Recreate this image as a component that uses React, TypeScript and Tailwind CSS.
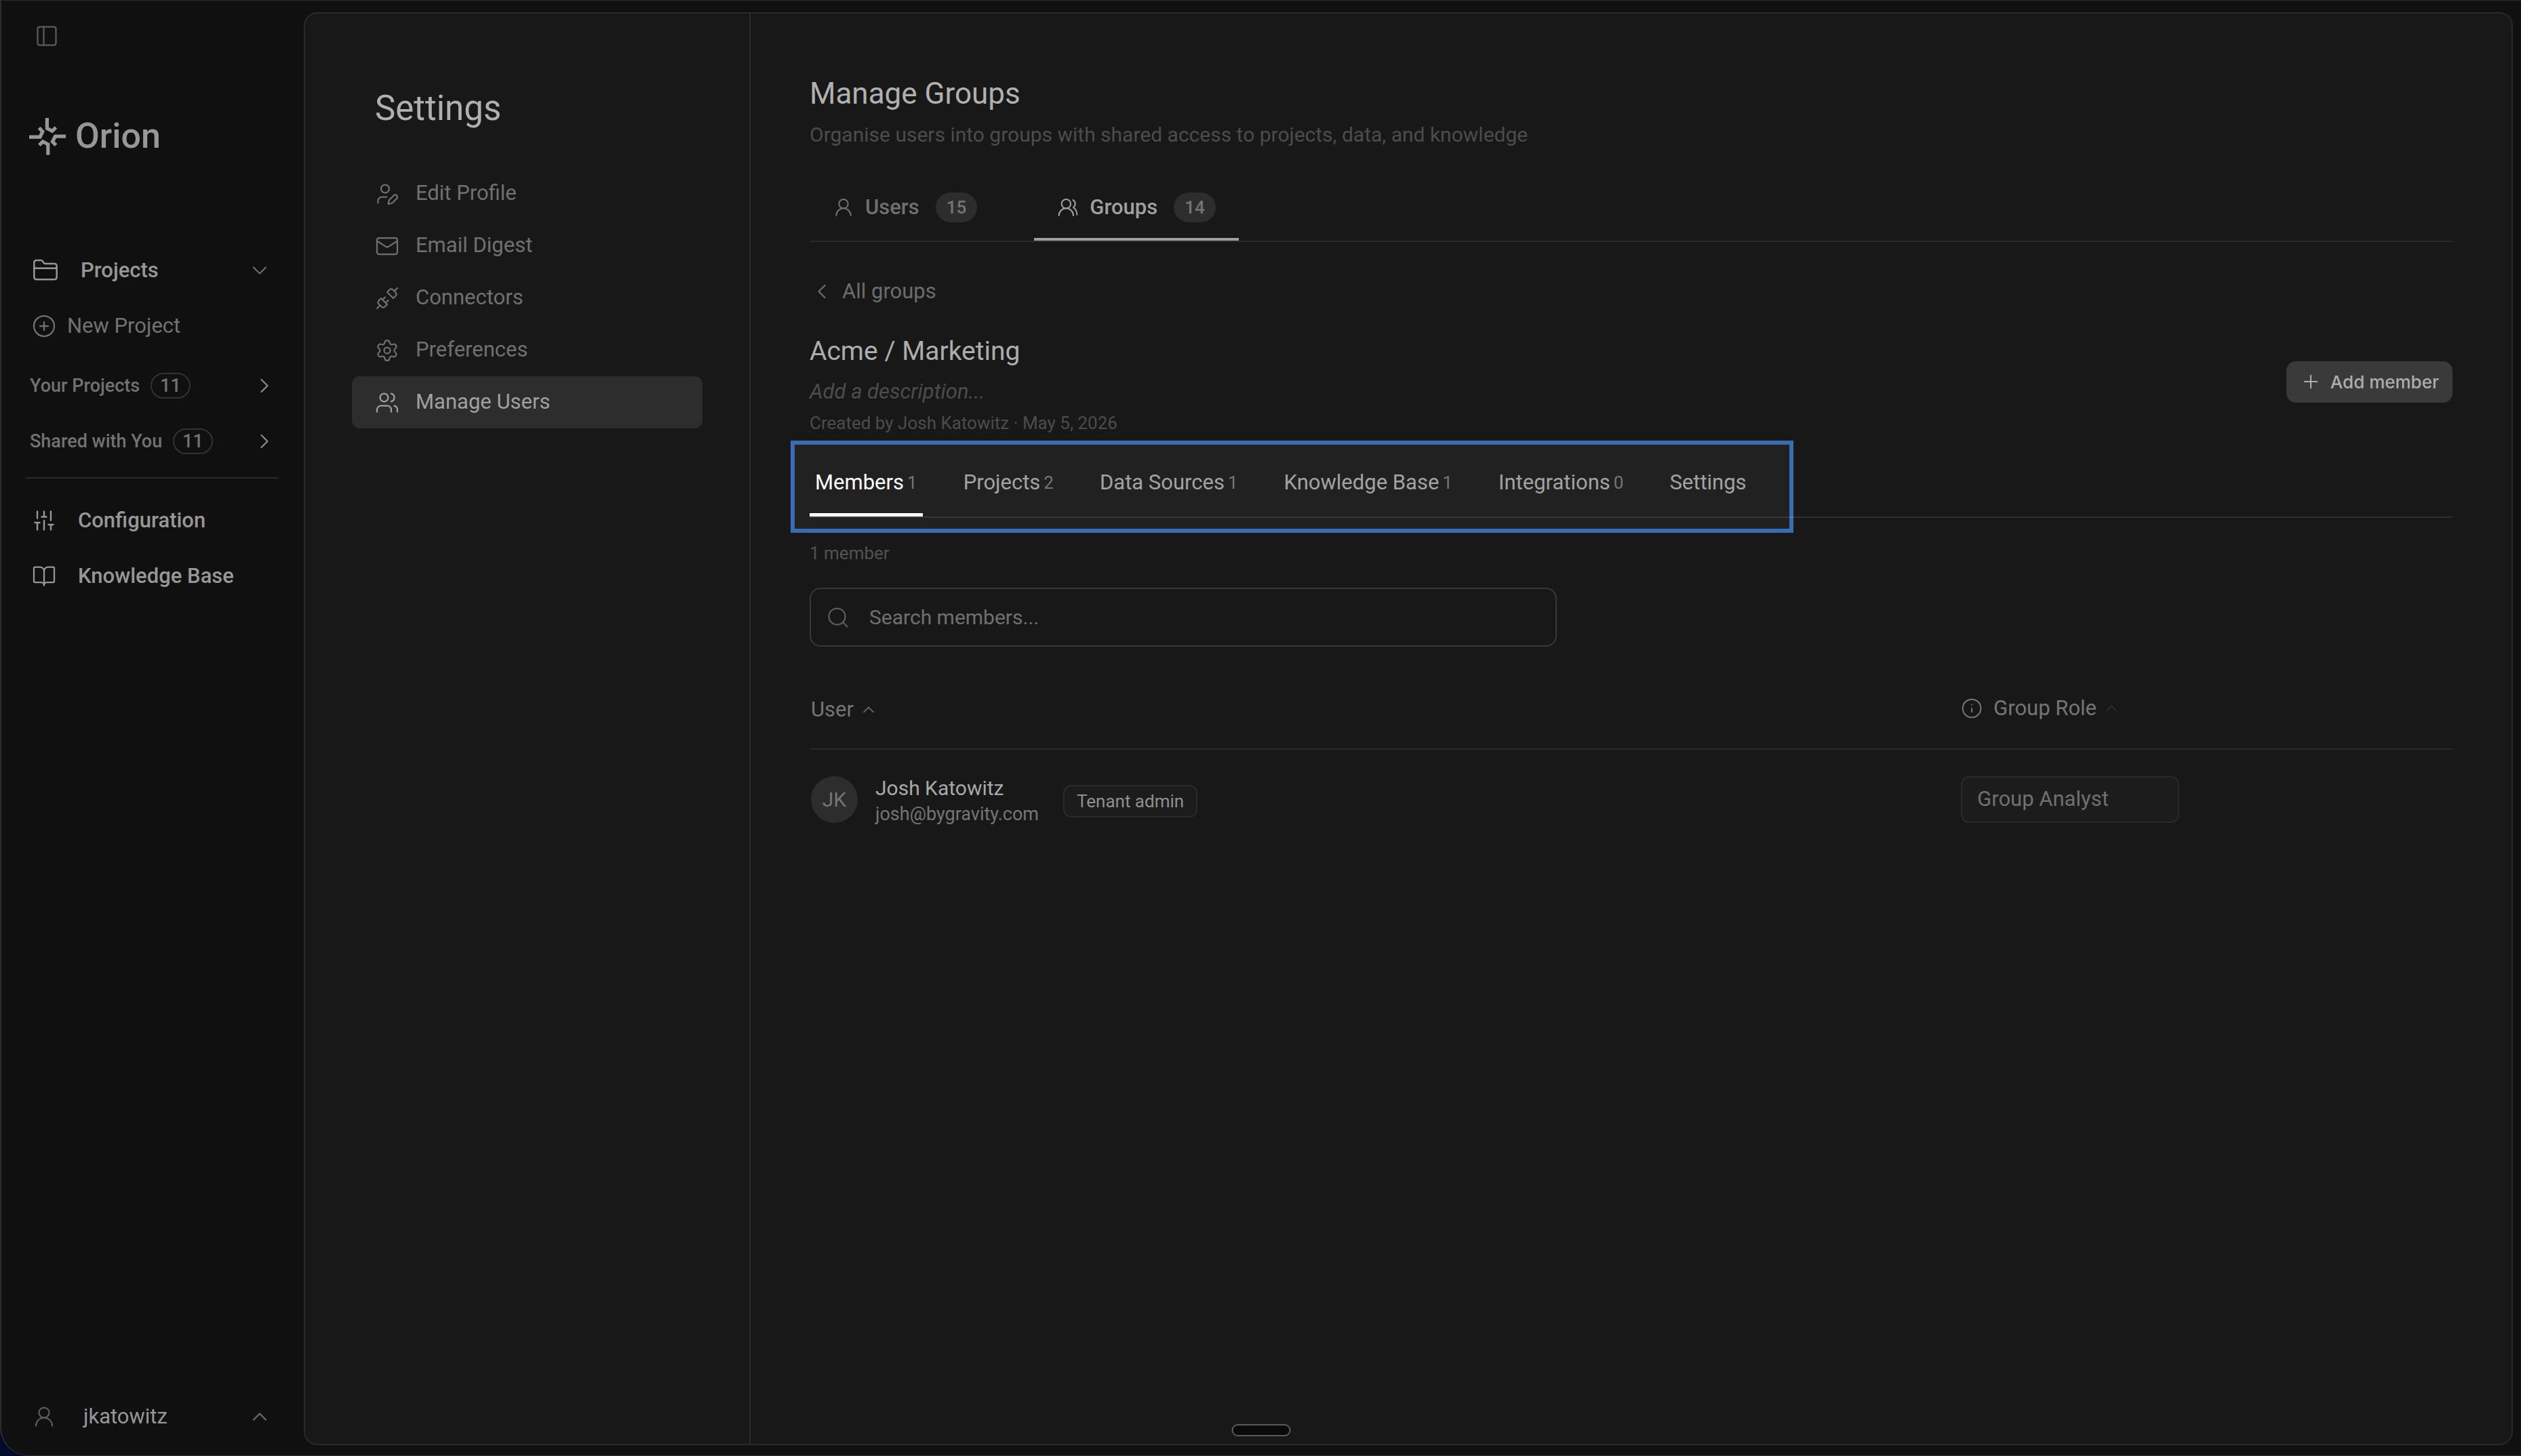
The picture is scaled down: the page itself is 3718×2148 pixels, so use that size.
import React, { useState } from 'react';
import {
  BookOpen,
  ChevronDown,
  ChevronLeft,
  ChevronRight,
  ChevronUp,
  CirclePlus,
  FolderClosed,
  Info,
  Mail,
  PanelLeft,
  Plus,
  Search,
  Settings,
  Unplug,
  UserPen,
  UserRound,
  Users,
  UsersRound,
  type LucideIcon,
} from 'lucide-react';

type Member = {
  initials: string;
  name: string;
  email: string;
  badge?: string;
  role: string;
};

const settingsLinks: { label: string; icon: LucideIcon }[] = [
  { label: 'Edit Profile', icon: UserPen },
  { label: 'Email Digest', icon: Mail },
  { label: 'Connectors', icon: Unplug },
  { label: 'Preferences', icon: Settings },
  { label: 'Manage Users', icon: Users },
];

const mainTabs: { label: string; count: number; icon: LucideIcon }[] = [
  { label: 'Users', count: 15, icon: UserRound },
  { label: 'Groups', count: 14, icon: UsersRound },
];

const groupTabs: { label: string; count?: number }[] = [
  { label: 'Members', count: 1 },
  { label: 'Projects', count: 2 },
  { label: 'Data Sources', count: 1 },
  { label: 'Knowledge Base', count: 1 },
  { label: 'Integrations', count: 0 },
  { label: 'Settings' },
];

const members: Member[] = [
  {
    initials: 'JK',
    name: 'Josh Katowitz',
    email: 'josh@bygravity.com',
    badge: 'Tenant admin',
    role: 'Group Analyst',
  },
];

const OrionLogo = () => (
  <svg width="54" height="55" viewBox="0 0 54 55" fill="none" stroke="currentColor" strokeWidth="5.2" aria-hidden="true">
    <path d="M26.4 0V15.5L34 19.3L39.4 14" />
    <path d="M54 27.2H38.5L34.4 35L39.6 40.2" />
    <path d="M27.8 54.6V39L20.2 35L14.8 40.2" />
    <path d="M0 28.2H16L19.8 20.2L14.6 14.6" />
  </svg>
);

const MixerIcon = () => (
  <svg
    width="36"
    height="36"
    viewBox="0 0 36 36"
    fill="none"
    stroke="currentColor"
    strokeWidth="2.4"
    strokeLinecap="round"
    aria-hidden="true"
  >
    <path d="M8 4.5V14.5M4.5 21H11.5M8 21V31.5" />
    <path d="M18 4.5V12.5M14.5 12.5H21.5M18 18V31.5" />
    <path d="M28 4.5V17.5M24.5 24H31.5M28 24V31.5" />
  </svg>
);

const Sidebar = () => (
  <aside className="flex w-[446px] shrink-0 flex-col pt-[34px] pr-[38px] pb-4 pl-9">
    <button type="button" aria-label="Toggle sidebar" className="ml-[13px] w-9 text-[#5c5c5c]">
      <PanelLeft size={36} strokeWidth={1.5} />
    </button>

    <div className="mt-[100px] ml-[5px] flex items-center gap-[14px] text-[#979797]">
      <OrionLogo />
      <span className="text-[52px] leading-[60px] font-medium">Orion</span>
    </div>

    <nav className="mt-[127px] flex flex-col">
      <button type="button" className="flex h-[82px] items-center px-[9px] text-[31px] font-medium text-[#979797]">
        <FolderClosed size={40} strokeWidth={1.5} />
        <span className="ml-8">Projects</span>
        <ChevronDown size={36} strokeWidth={1.5} className="ml-auto text-[#6a6a6a]" />
      </button>
      <button type="button" className="flex h-[82px] items-center px-[9px] text-[31px] text-[#727272]">
        <CirclePlus size={36} strokeWidth={1.5} />
        <span className="ml-4">New Project</span>
      </button>
      <div className="mt-[6px] flex flex-col border-b-2 border-[#2a2a2a] pb-3">
        {[
          { label: 'Your Projects', count: 11 },
          { label: 'Shared with You', count: 11 },
        ].map((item) => (
          <button
            key={item.label}
            type="button"
            className="flex h-[82px] items-center pr-[2px] pl-[6px] text-[27px] font-medium text-[#727272]"
          >
            {item.label}
            <span className="ml-4 rounded-full border-2 border-[#333] px-3 leading-[34px]">{item.count}</span>
            <ChevronRight size={36} strokeWidth={1.5} className="ml-auto text-[#8a8a8a]" />
          </button>
        ))}
      </div>
      <a href="#configuration" className="mt-[21px] flex h-[82px] items-center gap-8 px-[9px] text-[31px] font-medium text-[#979797]">
        <MixerIcon />
        Configuration
      </a>
      <a href="#knowledge" className="flex h-[82px] items-center gap-8 px-[9px] text-[31px] font-medium text-[#979797]">
        <BookOpen size={36} strokeWidth={1.5} />
        Knowledge Base
      </a>
    </nav>

    <button type="button" className="mt-auto flex h-[82px] items-center px-[9px] text-[31px] text-[#979797]">
      <UserRound size={36} strokeWidth={1.5} className="text-[#5c5c5c]" />
      <span className="ml-10">jkatowitz</span>
      <ChevronUp size={36} strokeWidth={1.5} className="ml-auto text-[#6a6a6a]" />
    </button>
  </aside>
);

const SettingsNav = () => (
  <aside className="w-[657px] shrink-0 border-r-2 border-[#2a2a2a] px-[69px] pt-[110px]">
    <h2 className="pl-[34px] text-[51px] leading-[60px] text-[#b0b0b0]">Settings</h2>
    <nav className="mt-[57px] flex flex-col">
      {settingsLinks.map(({ label, icon: Icon }) => {
        const active = label === 'Manage Users';
        return (
          <a
            key={label}
            href="#settings"
            aria-current={active ? 'page' : undefined}
            className={`flex h-[77px] items-center gap-6 rounded-xl pl-[34px] text-[31px] ${
              active ? 'bg-[#2d2d2d] text-[#a0a0a0]' : 'text-[#707070]'
            }`}
          >
            <Icon size={36} strokeWidth={1.5} />
            {label}
          </a>
        );
      })}
    </nav>
  </aside>
);

const MembersTable = () => (
  <table className="mt-9 w-full table-fixed text-left text-[31px]">
    <thead>
      <tr className="h-[115px] border-b-2 border-[#2a2a2a] text-[#757575]">
        <th className="w-[70%] px-[2px] font-normal">
          <button type="button" className="flex items-center gap-2">
            User
            <ChevronUp size={28} strokeWidth={1.5} />
          </button>
        </th>
        <th className="px-[2px] pb-1 font-normal">
          <button type="button" className="flex items-center">
            <Info size={32} strokeWidth={1.5} />
            <span className="ml-4">Group Role</span>
            <ChevronUp size={28} strokeWidth={1.5} className="ml-2 text-[#343434]" />
          </button>
        </th>
      </tr>
    </thead>
    <tbody>
      {members.map((member) => (
        <tr key={member.email} className="h-[147px]">
          <td className="px-[2px]">
            <div className="flex items-center">
              <span className="flex size-[69px] items-center justify-center rounded-full bg-[#2d2d2d] text-[30px] text-[#757575]">
                {member.initials}
              </span>
              <div className="ml-[26px] flex items-center gap-9 pt-[6px]">
                <div className="flex flex-col leading-[38px]">
                  <span className="text-[30px] text-[#a8a8a8]">{member.name}</span>
                  <span className="text-[27px] text-[#757575]">{member.email}</span>
                </div>
                {member.badge && (
                  <span className="rounded-xl border-2 border-[#2a2a2a] bg-[#1c1c1c] px-[18px] text-[26px] leading-[44px] text-[#8f8f8f]">
                    {member.badge}
                  </span>
                )}
              </div>
            </div>
          </td>
          <td className="px-[2px]">
            <select
              aria-label={`Group role for ${member.name}`}
              defaultValue={member.role}
              className="block h-[69px] w-[322px] appearance-none rounded-xl border-2 border-[#2a2a2a] bg-[#1c1c1c] px-[22px] text-[#707070]"
            >
              <option>Group Analyst</option>
              <option>Group Admin</option>
            </select>
          </td>
        </tr>
      ))}
    </tbody>
  </table>
);

const ManageGroups = () => {
  const [tab, setTab] = useState('Members');
  const [query, setQuery] = useState('');

  return (
    <main className="min-w-0 flex-1 px-[87px] pt-[92px]">
      <h1 className="text-[44px] leading-[52px] text-[#b0b0b0]">Manage Groups</h1>
      <p className="mt-[15px] text-[30px] leading-[40px] text-[#4c4c4c]">
        Organise users into groups with shared access to projects, data, and knowledge
      </p>

      <nav className="mt-[42px] flex gap-[50px] border-b-2 border-[#2a2a2a]">
        {mainTabs.map(({ label, count, icon: Icon }) => {
          const active = label === 'Groups';
          return (
            <button
              key={label}
              type="button"
              className={`flex h-[94px] items-center border-b-4 px-[34px] text-[31px] font-medium ${
                active ? 'border-[#a0a0a0] text-[#a0a0a0]' : 'border-transparent text-[#707070]'
              }`}
            >
              <Icon size={32} strokeWidth={1.5} />
              <span className="ml-4">{label}</span>
              <span className="ml-6 rounded-full bg-[#2d2d2d] px-4 text-[26px] leading-[44px] text-[#757575]">{count}</span>
            </button>
          );
        })}
      </nav>

      <button type="button" className="mt-[53px] flex items-center gap-3 text-[31px] leading-[40px] text-[#6c6c6c]">
        <ChevronLeft size={36} strokeWidth={1.5} />
        All groups
      </button>

      <header className="mt-11 flex items-center justify-between">
        <div>
          <h2 className="text-[39px] leading-[48px] text-[#adadad]">Acme / Marketing</h2>
          <p className="mt-4 text-[31px] leading-[40px] text-[#4c4c4c] italic">Add a description...</p>
          <p className="mt-[10px] text-[26px] leading-[32px] text-[#4c4c4c]">Created by Josh Katowitz · May 5, 2026</p>
        </div>
        <button
          type="button"
          className="mb-2 flex h-[61px] items-center gap-[13px] rounded-[14px] bg-[#3a3a3a] px-5 font-['Inter',sans-serif] text-[26px] font-medium text-[#adadad]"
        >
          <Plus size={32} strokeWidth={1.5} />
          Add member
        </button>
      </header>

      <nav className="mt-7 border-b-2 border-white/10">
        <div className="relative flex w-fit gap-[52px]">
          <div className="absolute -top-[18px] -right-[61px] -bottom-6 -left-7 -z-10 border-[6px] border-[#3a6cb3] bg-[#212121]" />
          {groupTabs.map(({ label, count }) => {
            const active = label === tab;
            return (
              <button
                key={label}
                type="button"
                onClick={() => setTab(label)}
                className={`flex h-[94px] items-center gap-[5px] border-b-[5px] px-2 text-[31px] ${
                  active ? 'border-white text-white' : 'border-transparent text-[#a3a3a3]'
                }`}
              >
                {label}
                {count !== undefined && <span className="text-[26px] text-[#757575]">{count}</span>}
              </button>
            );
          })}
        </div>
      </nav>

      <p className="mt-9 text-[26px] leading-[32px] text-[#525252]">1 member</p>

      <label className="mt-[35px] flex h-[87px] w-[1102px] items-center gap-7 rounded-2xl border-2 border-[#383838] px-[22px]">
        <Search size={36} strokeWidth={1.5} className="shrink-0 text-[#5c5c5c]" />
        <input
          type="text"
          value={query}
          onChange={(e) => setQuery(e.target.value)}
          placeholder="Search members..."
          aria-label="Search members"
          className="w-full bg-transparent text-[30px] text-[#a3a3a3] outline-none placeholder:text-[#707070]"
        />
      </label>

      <MembersTable />
    </main>
  );
};

const App: React.FC = () => (
  <div className="bg-[#030b2a] font-['Roboto',sans-serif]">
    <div className="relative flex min-h-screen overflow-hidden rounded-bl-[42px] border-t border-b border-l-2 border-[#2d2d2d] bg-[#101010]">
      <Sidebar />
      <div className="relative isolate mt-[17px] mr-3 mb-[15px] flex min-w-0 flex-1 rounded-[20px] border-2 border-[#2a2a2a] bg-[#181818]">
        <SettingsNav />
        <ManageGroups />
      </div>
      <div className="absolute bottom-7 left-1/2 h-[18px] w-[87px] -translate-x-1/2 rounded-full border-2 border-[#5a5a5a] bg-[#0a0a0a]" />
    </div>
  </div>
);

export default App;
